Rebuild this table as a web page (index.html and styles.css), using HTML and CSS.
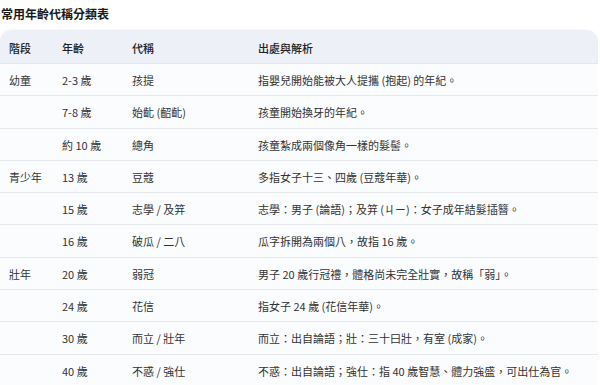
FILE: index.html
```html
<!DOCTYPE html>
<html lang="zh-Hant">
<head>
<meta charset="utf-8">
<link rel="stylesheet" href="styles.css">
</head>
<body>
<h1 class="title">常用年齡代稱分類表</h1>
<div class="card">
<table class="age-table">
<thead>
<tr><th class="c1">階段</th><th class="c2">年齡</th><th class="c3">代稱</th><th class="c4">出處與解析</th></tr>
</thead>
<tbody>
<tr><td>幼童</td><td>2-3 歲</td><td>孩提</td><td>指嬰兒開始能被大人提攜 (抱起) 的年紀。</td></tr>
<tr><td></td><td>7-8 歲</td><td>始齔 (齠齔)</td><td>孩童開始換牙的年紀。</td></tr>
<tr><td></td><td>約 10 歲</td><td>總角</td><td>孩童紮成兩個像角一樣的髮髻。</td></tr>
<tr><td>青少年</td><td>13 歲</td><td>豆蔻</td><td>多指女子十三、四歲 (豆蔻年華)。</td></tr>
<tr><td></td><td>15 歲</td><td>志學 / 及笄</td><td>志學：男子 (論語)；及笄 (ㄐㄧ)：女子成年結髮插簪。</td></tr>
<tr><td></td><td>16 歲</td><td>破瓜 / 二八</td><td>瓜字拆開為兩個八，故指 16 歲。</td></tr>
<tr><td>壯年</td><td>20 歲</td><td>弱冠</td><td>男子 20 歲行冠禮，體格尚未完全壯實，故稱「弱」。</td></tr>
<tr><td></td><td>24 歲</td><td>花信</td><td>指女子 24 歲 (花信年華)。</td></tr>
<tr><td></td><td>30 歲</td><td>而立 / 壯年</td><td>而立：出自論語；壯：三十曰壯，有室 (成家)。</td></tr>
<tr><td></td><td>40 歲</td><td>不惑 / 強仕</td><td>不惑：出自論語；強仕：指 40 歲智慧、體力強盛，可出仕為官。</td></tr>
</tbody>
</table>
</div>
</body>
</html>
```
FILE: styles.css
```css
html, body {
  margin: 0;
  padding: 0;
  background: #ffffff;
}
body {
  font-family: "Noto Sans CJK TC", "Noto Sans", sans-serif;
  color: #333;
  width: 598px;
}
.title {
  margin: 0;
  padding: 6px 0 0 1px;
  font-size: 12px;
  line-height: 16px;
  font-weight: 700;
  color: #1a1a1a;
}
.card {
  margin-top: 8px;
  border-radius: 12px 12px 0 0;
  overflow: hidden;
  background: #fbfcfe;
  box-shadow: 0 0 2px rgba(0,0,0,0.08);
}
.age-table {
  width: 100%;
  border-collapse: collapse;
  font-size: 11px;
  line-height: 16px;
}
.age-table th {
  background: #edf0f6;
  text-align: left;
  font-weight: 500;
  color: #222;
  padding: 10px 0 7px 9px;
  border-bottom: 1px solid #e3e6ec;
}
.age-table td {
  padding: 8px 0 7.3px 9px;
  border-bottom: 1px solid #e6e8ec;
  white-space: nowrap;
}
.c1 { width: 44px; }
.c2 { width: 61px; }
.c3 { width: 117px; }
```
